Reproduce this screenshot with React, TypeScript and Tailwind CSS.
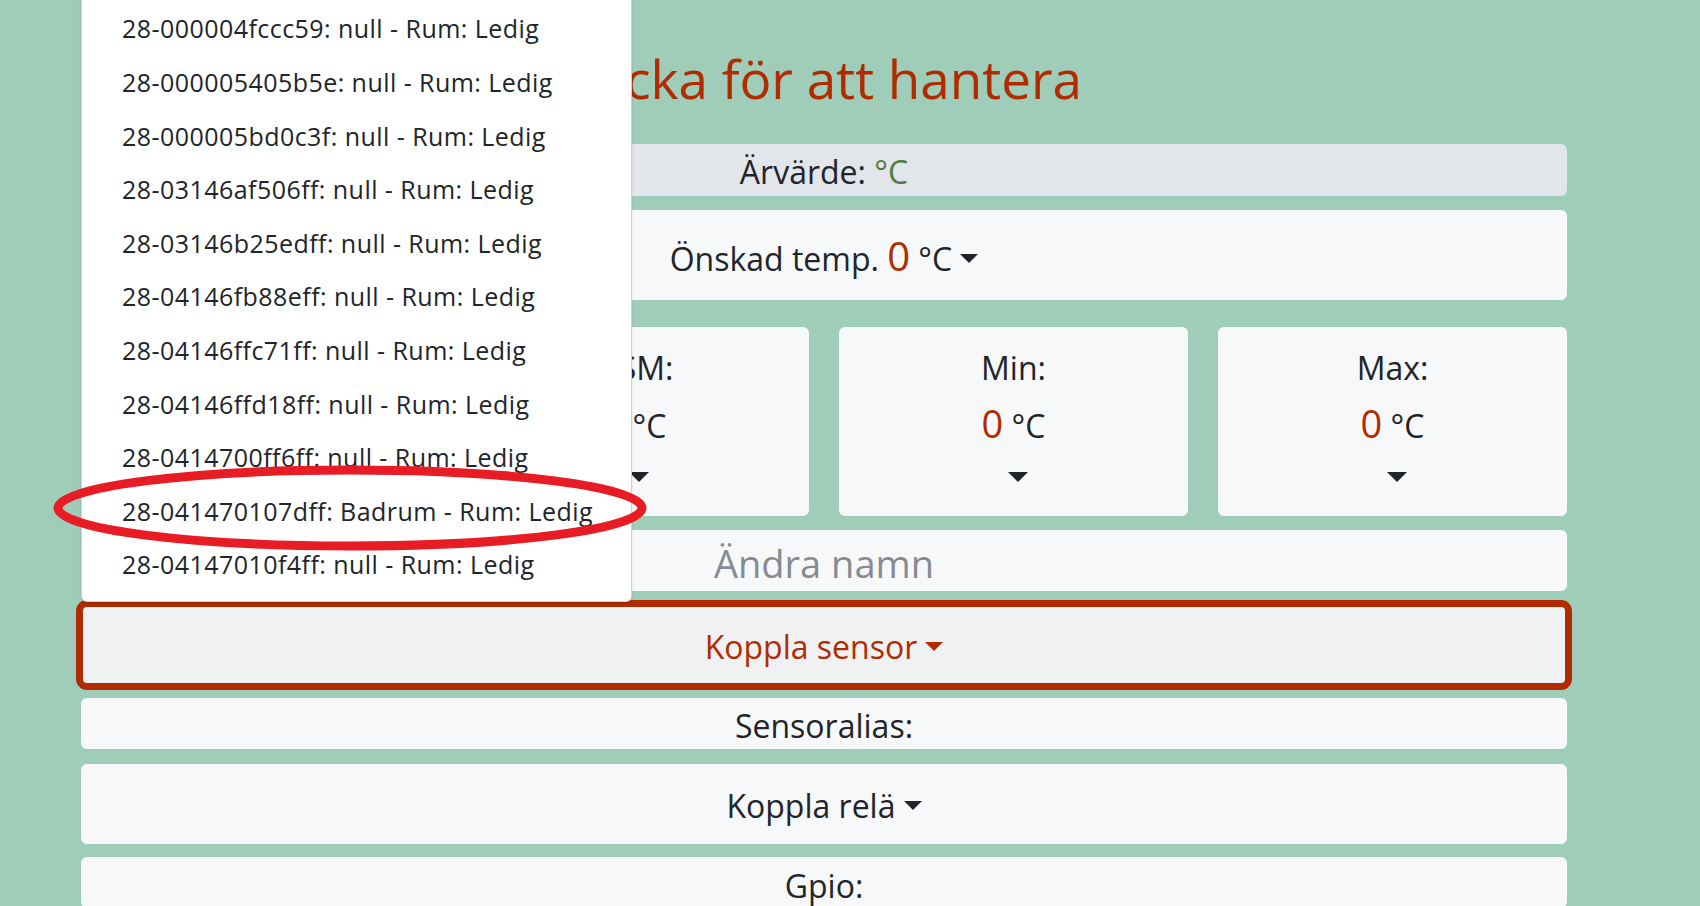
import React from "react";

const sensors = [
  "28-000004fccc59: null - Rum: Ledig",
  "28-000005405b5e: null - Rum: Ledig",
  "28-000005bd0c3f: null - Rum: Ledig",
  "28-03146af506ff: null - Rum: Ledig",
  "28-03146b25edff: null - Rum: Ledig",
  "28-04146fb88eff: null - Rum: Ledig",
  "28-04146ffc71ff: null - Rum: Ledig",
  "28-04146ffd18ff: null - Rum: Ledig",
  "28-0414700ff6ff: null - Rum: Ledig",
  "28-041470107dff: Badrum - Rum: Ledig",
  "28-04147010f4ff: null - Rum: Ledig",
];

const cards = ["Ute:", "GSM:", "Min:", "Max:"];

function Caret({ className = "" }: { className?: string }) {
  return (
    <span
      className={
        "ml-[0.255em] inline-block align-[0.255em] border-t-[0.3em] border-r-[0.3em] border-l-[0.3em] border-b-0 border-solid border-r-transparent border-l-transparent " +
        className
      }
    />
  );
}

export default function App() {
  return (
    <div
      className="relative h-screen overflow-hidden bg-[#a0cdb9] text-[#212529]"
      style={{ fontFamily: '"Open Sans", "Noto Sans", sans-serif' }}
    >
      <div className="ml-[81px] flex w-[1486px] flex-col">
        <h1 className="mt-[47px] h-[64px] text-center text-[53px] leading-[64px] font-medium text-[#b02c00]">
          Klicka för att hantera
        </h1>

        <div className="mt-[33px] h-[52px] rounded-md bg-[#e2e5e9] pt-[4px] text-center text-[32px] leading-[48px]">
          Ärvärde: <span className="text-[#4f7d42]">°C</span>
        </div>

        <div className="mt-[14px] h-[90px] rounded-md bg-[#f7f8fa] pt-[25px] text-center text-[32px] leading-[48px]">
          Önskad temp. <span className="text-[40px] leading-none text-[#b02c00]">0</span> °C
          <Caret />
        </div>

        <div className="mt-[27px] grid grid-cols-4 gap-[30px]">
          {cards.map((label) => (
            <div
              key={label}
              className="flex h-[189px] flex-col items-center rounded-md bg-[#f7f8fa] pt-[17px] text-[32px] leading-[48px]"
            >
              <div>{label}</div>
              <div className="mt-[10px]">
                <span className="text-[38px] leading-none text-[#b02c00]">0</span> °C
              </div>
              <div className="mt-[22px] ml-[8px] h-0 w-0 border-t-[10px] border-r-[10px] border-l-[10px] border-solid border-r-transparent border-l-transparent border-t-[#212529]" />
            </div>
          ))}
        </div>

        <input
          className="mt-[14px] h-[61px] rounded-md bg-[#f7f8fa] pt-[4px] text-center text-[38px] outline-none placeholder:text-[#878b91]"
          placeholder="Ändra namn"
        />

        <div className="relative mt-[14px]">
          <div className="absolute bottom-[calc(100%+3px)] left-0 z-10 w-[551px] rounded-md border border-black/[.175] bg-white pt-[9px] pb-[9px] shadow-sm">
            {sensors.map((s) => (
              <div
                key={s}
                className="h-[53.6px] whitespace-nowrap px-[40px] text-[25px] leading-[53.6px] tracking-[0.45px] text-[#212529]"
              >
                {s}
              </div>
            ))}
          </div>
          <button className="flex h-[80px] w-full items-center justify-center rounded-md border-2 border-[#b02c00] bg-[#f0f1f3] pt-[4px] text-[32px] leading-[48px] text-[#b02c00] shadow-[0_0_0_5px_#b02c00]">
            <span>
              Koppla sensor
              <Caret />
            </span>
          </button>
        </div>

        <div className="mt-[13px] h-[51px] rounded-md bg-[#f7f8fa] pt-[4px] text-center text-[32px] leading-[48px]">
          Sensoralias:
        </div>

        <div className="mt-[15px] flex h-[80px] items-center justify-center rounded-md bg-[#f7f8fa] pt-[4px] text-[32px] leading-[48px]">
          <span>
            Koppla relä
            <Caret />
          </span>
        </div>

        <div className="mt-[13px] h-[51px] rounded-md bg-[#f7f8fa] pt-[5px] text-center text-[32px] leading-[48px]">
          Gpio:
        </div>
      </div>

      <svg className="pointer-events-none absolute inset-0 z-20" width="1700" height="906">
        <ellipse cx="350" cy="508" rx="292" ry="38" fill="none" stroke="#e81c24" strokeWidth="9" />
      </svg>
    </div>
  );
}
